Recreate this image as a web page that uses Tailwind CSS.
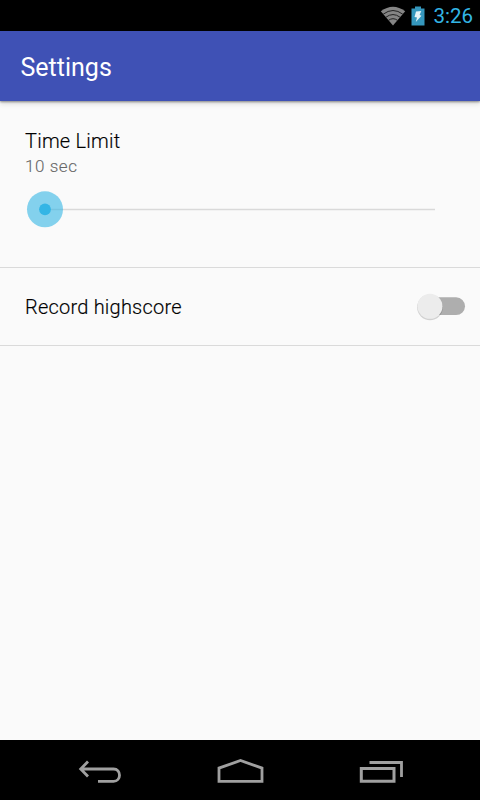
<!DOCTYPE html>
<html lang="en">
<head>
<meta charset="utf-8">
<title>Settings</title>
<script src="https://cdn.jsdelivr.net/npm/@tailwindcss/browser@4"></script>
</head>
<body class="w-[480px] h-[800px] overflow-hidden flex flex-col bg-[#fafafa] font-['Roboto',sans-serif]">
  <div class="h-[31px] shrink-0 bg-black flex items-center justify-end pr-[7px]">
    <svg class="w-[26px] h-[20px] mr-[5px]" viewBox="0 0 26 20">
      <path d="M.8 5.200Q13-3.800 25.200 5.200L13 19.400Z" fill="#858585"/>
      <path d="M3.200 8.200Q13 .8 22.800 8.200M5.800 11.300Q13 5.800 20.200 11.300M8.400 14.400Q13 11 17.600 14.400" fill="none" stroke="#222" stroke-width="1"/>
    </svg>
    <svg class="w-[14px] h-[20px] mr-[8px]" viewBox="0 0 14 20">
      <path d="M.5 2.500H4V.5H10V2.500H13.500V19.500H.5Z" fill="#3597bd"/>
      <path d="M5 5.500L10.300 5L8.600 9L10.500 9.800L4.800 16L6 11.400L3.500 11Z" fill="#e6f3f8"/>
    </svg>
    <div class="text-[20.500px] leading-[31px] text-[#33b5e5] h-[31px] pt-px">3:26</div>
  </div>
  <header class="h-[70px] shrink-0 bg-[#3f51b5] pl-[20.500px] flex items-center shadow-[0_1px_2px_rgba(0,0,0,0.4),0_3px_5px_rgba(0,0,0,0.12)]">
    <h1 class="text-[25px] leading-[30px] text-white pt-[3px]">Settings</h1>
  </header>
  <main class="flex-1">
    <section class="h-[167px] pt-[27px] pl-[25px] border-b border-[#dadada]">
      <h2 class="text-[20px] leading-[26px] font-light tracking-[0.220px] text-black [-webkit-text-stroke:0.150px_#000]">Time Limit</h2>
      <p class="text-[17px] leading-[24px] font-light tracking-[0.550px] text-[#666] [-webkit-text-stroke:0.100px_#666]">10 sec</p>
      <svg class="w-[412px] h-[38px] mt-[12px]" viewBox="25 190 412 38">
        <path d="M45 209.500H435" stroke="#d9d9d9" stroke-width="1.500"/>
        <circle cx="45" cy="209.300" r="18" fill="#33b5e5" fill-opacity=".6"/>
        <circle cx="45" cy="209.300" r="5.900" fill="#33b5e5"/>
      </svg>
    </section>
    <section class="h-[78px] pl-[25px] pr-[12px] pb-[2px] flex items-center justify-between border-b border-[#dadada]">
      <h2 class="text-[20px] leading-[26px] font-light tracking-[0.220px] text-black [-webkit-text-stroke:0.150px_#000] pt-[2px]">Record highscore</h2>
      <svg class="w-[54px] h-[32px]" viewBox="414 290 54 32">
        <rect x="421" y="297.300" width="44" height="17.700" rx="8.850" fill="#aeaeae"/>
        <circle cx="430" cy="307.300" r="12.900" fill="#000" fill-opacity=".16"/>
        <circle cx="430" cy="306.300" r="12.500" fill="#ececec"/>
      </svg>
    </section>
  </main>
  <nav class="h-[60px] shrink-0 bg-black pl-[76px] pr-[75px] flex items-center justify-between pt-[4px]">
    <svg class="w-[48px] h-[28px]" viewBox="76 758 48 28" fill="none" stroke="#a0a0a0" stroke-width="2.800">
      <path d="M88 761.500L80.700 769L88 776.500M81 769H113.500C121.500 769 121.500 781.300 113.500 781.300H98"/>
    </svg>
    <svg class="w-[48px] h-[28px]" viewBox="216.500 758 48 28" fill="none" stroke="#a0a0a0" stroke-width="2.800">
      <path d="M218.500 781.400V768.100L240 760.500L261.500 768.100V781.400Z"/>
    </svg>
    <svg class="w-[48px] h-[28px]" viewBox="357 758 48 28" fill="none" stroke="#a0a0a0">
      <path d="M361.300 768.500H394V781.300H361.300Z" stroke-width="3"/>
      <path d="M369.500 762.500H401.500V777" stroke-width="2.800"/>
    </svg>
  </nav>
</body>
</html>
